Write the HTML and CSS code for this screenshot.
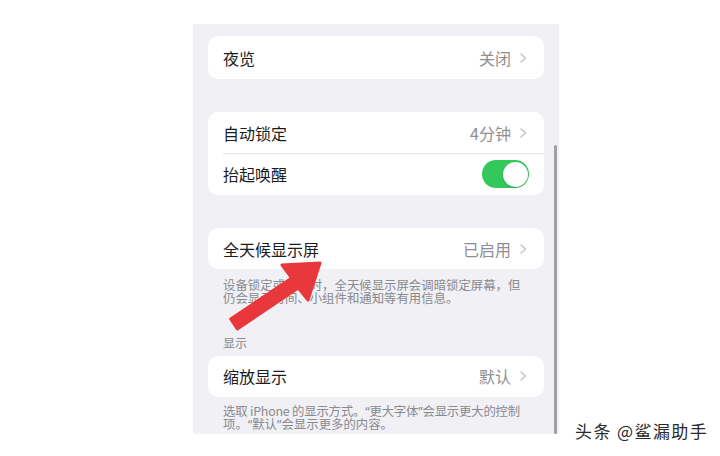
FILE: index.html
```html
<!DOCTYPE html>
<html>
  <head>
    <link rel="stylesheet" href="styles.css">
  </head>
  <body>
    <div class="page">
      <div class="phone">
        <!-- Night Shift -->
        <div class="group group-first">
          <div class="row row-tall">
            <span class="label">夜览</span>
            <span class="value">关闭</span>
            <svg class="chevron" width="7" height="10" viewBox="0 0 7 10"><path d="M1 1l4.5 4-4.5 4" /></svg>
          </div>
        </div>

        <!-- Auto-Lock / Raise to Wake -->
        <div class="group">
          <div class="row row-41">
            <span class="label">自动锁定</span>
            <span class="value">4分钟</span>
            <svg class="chevron" width="7" height="10" viewBox="0 0 7 10"><path d="M1 1l4.5 4-4.5 4" /></svg>
          </div>
          <div class="row row-42 row-sep">
            <span class="label">抬起唤醒</span>
            <span class="toggle"><span class="knob"></span></span>
          </div>
        </div>

        <!-- Always On -->
        <div class="group">
          <div class="row row-41">
            <span class="label">全天候显示屏</span>
            <span class="value">已启用</span>
            <svg class="chevron" width="7" height="10" viewBox="0 0 7 10"><path d="M1 1l4.5 4-4.5 4" /></svg>
          </div>
        </div>
        <div class="footnote footnote-first">
          <div class="line">设备锁定或变暗时，全天候显示屏会调暗锁定屏幕，但</div>
          <div class="line">仍会显示时间、小组件和通知等有用信息。</div>
        </div>

        <div class="section-title">显示</div>
        <div class="group group-tight">
          <div class="row row-41">
            <span class="label">缩放显示</span>
            <span class="value">默认</span>
            <svg class="chevron" width="7" height="10" viewBox="0 0 7 10"><path d="M1 1l4.5 4-4.5 4" /></svg>
          </div>
        </div>
        <div class="footnote">
          <div class="line line-tight">选取 iPhone 的显示方式。<span class="q">“</span>更大字体<span class="q">”</span>会显示更大的控制</div>
          <div class="line">项。<span class="q">“</span>默认<span class="q">”</span>会显示更多的内容。</div>
        </div>

        <div class="scrollbar"></div>
      </div>

      <!-- Red annotation arrow -->
      <svg class="arrow" width="720" height="456" viewBox="0 0 720 456">
        <polygon points="230.7,319 291.7,278 282,265 320,263 308,300 298.3,288 237.3,329" />
      </svg>

      <div class="watermark">头条 @鲨漏助手</div>
    </div>
  </body>
</html>
```

FILE: styles.css
```css
* {
  margin: 0;
  padding: 0;
  box-sizing: border-box;
}

body {
  background: #ffffff;
  font-family: "Noto Sans CJK SC", "Noto Sans", sans-serif;
}

.page {
  position: relative;
  width: 720px;
  height: 456px;
  padding: 24px 0 0 193px;
}

.phone {
  position: relative;
  width: 366px;
  height: 410px;
  background: #f0f0f5;
  padding: 12px 15px 0;
  overflow: hidden;
}

.group {
  background: #ffffff;
  border-radius: 10px;
  margin-top: 33px;
}

.group-first {
  margin-top: 0;
}

.group-tight {
  margin-top: 6px;
}

.row {
  display: flex;
  align-items: center;
  padding: 0 17px 0 15px;
  position: relative;
}

.row-tall {
  height: 43px;
}

.row-41 {
  height: 41px;
}

.row-42 {
  height: 42px;
  padding-right: 15px;
}

.row-sep::before {
  content: "";
  position: absolute;
  left: 15px;
  right: 0;
  top: 0;
  height: 1px;
  background: #e3e3e7;
}

.label {
  flex: 1;
  font-size: 16px;
  color: #1c1c1e;
}

.value {
  font-size: 16px;
  color: #8e8e93;
  margin-right: 9px;
}

.chevron path {
  fill: none;
  stroke: #c4c4c8;
  stroke-width: 1.5;
  stroke-linecap: round;
  stroke-linejoin: round;
}

.toggle {
  width: 47px;
  height: 28px;
  border-radius: 14px;
  background: #34c759;
  display: flex;
  align-items: center;
  justify-content: flex-end;
  padding-right: 1.5px;
}

.knob {
  width: 25px;
  height: 25px;
  border-radius: 50%;
  background: #ffffff;
  box-shadow: 0 1px 2px rgb(0 0 0 / 0.15);
}

.footnote {
  font-size: 12.4px;
  color: #8a8a8e;
  padding-left: 15px;
  margin-top: 8px;
  white-space: nowrap;
}

.footnote .line {
  height: 13.4px;
  line-height: 13.4px;
}

.footnote .line-tight {
  letter-spacing: -0.2px;
}

.footnote .q {
  font-family: "Noto Sans", sans-serif;
  line-height: 1;
}

.footnote-first {
  margin-top: 10px;
}

.section-title {
  font-size: 12px;
  line-height: 14px;
  color: #8a8a8e;
  padding-left: 15px;
  margin-top: 30px;
}

.scrollbar {
  position: absolute;
  left: 361px;
  top: 121px;
  bottom: 0;
  width: 2.5px;
  background: #a0a0a4;
  border-radius: 2px;
}

.arrow {
  position: absolute;
  left: 0;
  top: 0;
}

.arrow polygon {
  fill: #e8383b;
  stroke: #e8383b;
  stroke-width: 3;
  stroke-linejoin: round;
}

.watermark {
  position: absolute;
  left: 575px;
  top: 421px;
  font-size: 17px;
  line-height: 20px;
  letter-spacing: 1.4px;
  color: #2a2a2a;
  white-space: nowrap;
  text-shadow: 0 0 2px #ffffff, 0 0 2px #ffffff;
}
```
